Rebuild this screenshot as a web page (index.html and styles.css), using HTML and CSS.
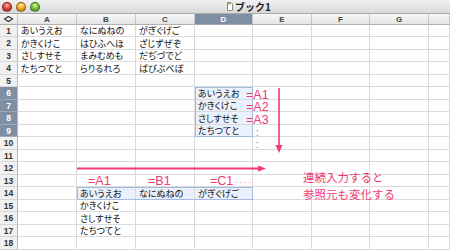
FILE: index.html
```html
<!DOCTYPE html>
<html lang="ja">
<head>
    <meta charset="UTF-8">
    <title>ブック1</title>
    <link rel="stylesheet" href="styles.css">
</head>
<body>
    <div class="window">
        <div class="titlebar">
            <div class="lights">
                <span class="light red"></span>
                <span class="light yellow"></span>
                <span class="light green"></span>
            </div>
            <div class="title">
                <svg width="6" height="9" viewBox="0 0 6 9"><path d="M0.5 0.5 H4 L5.5 2 V8.5 H0.5 Z" fill="#fff" stroke="#8a8a8a"/><path d="M1 1 H4 V2.5 H1 Z" fill="#8cc266"/></svg>
                <span>ブック1</span>
            </div>
        </div>

        <div class="sheet">
            <div class="hd corner"><svg width="9" height="6" viewBox="0 0 9 6"><path d="M4.5 0.5 L8.5 3 L4.5 5.5 L0.5 3 Z" fill="none" stroke="#333" stroke-width="1.2"/></svg></div><div class="hd">A</div><div class="hd">B</div><div class="hd">C</div><div class="hd hl">D</div><div class="hd">E</div><div class="hd">F</div><div class="hd">G</div><div class="hd"></div>

            <div class="num">1</div><div class="cell">あいうえお</div><div class="cell">なにぬねの</div><div class="cell">がぎぐげご</div><div class="cell"></div><div class="cell"></div><div class="cell"></div><div class="cell"></div><div class="cell"></div>
            <div class="num">2</div><div class="cell">かきくけこ</div><div class="cell">はひふへほ</div><div class="cell">ざじずぜぞ</div><div class="cell"></div><div class="cell"></div><div class="cell"></div><div class="cell"></div><div class="cell"></div>
            <div class="num">3</div><div class="cell">さしすせそ</div><div class="cell">まみむめも</div><div class="cell">だぢづでど</div><div class="cell"></div><div class="cell"></div><div class="cell"></div><div class="cell"></div><div class="cell"></div>
            <div class="num">4</div><div class="cell">たちつてと</div><div class="cell">らりるれろ</div><div class="cell">ばびぶべぼ</div><div class="cell"></div><div class="cell"></div><div class="cell"></div><div class="cell"></div><div class="cell"></div>
            <div class="num">5</div><div class="cell"></div><div class="cell"></div><div class="cell"></div><div class="cell"></div><div class="cell"></div><div class="cell"></div><div class="cell"></div><div class="cell"></div>
            <div class="num hl">6</div><div class="cell"></div><div class="cell"></div><div class="cell"></div><div class="cell sel">あいうえお</div><div class="cell"></div><div class="cell"></div><div class="cell"></div><div class="cell"></div>
            <div class="num hl">7</div><div class="cell"></div><div class="cell"></div><div class="cell"></div><div class="cell sel">かきくけこ</div><div class="cell"></div><div class="cell"></div><div class="cell"></div><div class="cell"></div>
            <div class="num hl">8</div><div class="cell"></div><div class="cell"></div><div class="cell"></div><div class="cell sel">さしすせそ</div><div class="cell"></div><div class="cell"></div><div class="cell"></div><div class="cell"></div>
            <div class="num hl">9</div><div class="cell"></div><div class="cell"></div><div class="cell"></div><div class="cell sel">たちつてと</div><div class="cell"></div><div class="cell"></div><div class="cell"></div><div class="cell"></div>
            <div class="num">10</div><div class="cell"></div><div class="cell"></div><div class="cell"></div><div class="cell"></div><div class="cell"></div><div class="cell"></div><div class="cell"></div><div class="cell"></div>
            <div class="num">11</div><div class="cell"></div><div class="cell"></div><div class="cell"></div><div class="cell"></div><div class="cell"></div><div class="cell"></div><div class="cell"></div><div class="cell"></div>
            <div class="num">12</div><div class="cell"></div><div class="cell"></div><div class="cell"></div><div class="cell"></div><div class="cell"></div><div class="cell"></div><div class="cell"></div><div class="cell"></div>
            <div class="num">13</div><div class="cell"></div><div class="cell"></div><div class="cell"></div><div class="cell"></div><div class="cell"></div><div class="cell"></div><div class="cell"></div><div class="cell"></div>
            <div class="num">14</div><div class="cell"></div><div class="cell sel">あいうえお</div><div class="cell sel">なにぬねの</div><div class="cell sel">がぎぐげご</div><div class="cell"></div><div class="cell"></div><div class="cell"></div><div class="cell"></div>
            <div class="num">15</div><div class="cell"></div><div class="cell">かきくけこ</div><div class="cell"></div><div class="cell"></div><div class="cell"></div><div class="cell"></div><div class="cell"></div><div class="cell"></div>
            <div class="num">16</div><div class="cell"></div><div class="cell">さしすせそ</div><div class="cell"></div><div class="cell"></div><div class="cell"></div><div class="cell"></div><div class="cell"></div><div class="cell"></div>
            <div class="num">17</div><div class="cell"></div><div class="cell">たちつてと</div><div class="cell"></div><div class="cell"></div><div class="cell"></div><div class="cell"></div><div class="cell"></div><div class="cell"></div>
            <div class="num">18</div><div class="cell"></div><div class="cell"></div><div class="cell"></div><div class="cell"></div><div class="cell"></div><div class="cell"></div><div class="cell"></div><div class="cell"></div>
        </div>

        <!-- selections -->
        <div class="selbox sel_col"></div>
        <div class="selbox sel_row"></div>

        <!-- notes drawn over the sheet -->
        <span class="ref ref_a1">=A1</span>
        <span class="ref ref_a2">=A2</span>
        <span class="ref ref_a3">=A3</span>
        <span class="dots dots_1">:</span>
        <span class="dots dots_2">:</span>

        <svg class="arrow_down" width="10" height="66" viewBox="0 0 10 66">
            <line x1="5" y1="0" x2="5" y2="58" stroke="#ef3a72" stroke-width="1.6"/>
            <polygon points="1.5,57 8.5,57 5,65" fill="#ef3a72"/>
        </svg>
        <svg class="arrow_right" width="190" height="7" viewBox="0 0 190 7">
            <line x1="0" y1="3.5" x2="182" y2="3.5" stroke="#ef3a72" stroke-width="1.8"/>
            <polygon points="181,0.5 189,3.5 181,6.5" fill="#ef3a72"/>
        </svg>

        <span class="ref ref_b_a1">=A1</span>
        <span class="ref ref_b_b1">=B1</span>
        <span class="ref ref_b_c1">=C1<small>····</small></span>

        <p class="note">連続入力すると<br>参照元も変化する</p>
    </div>
</body>
</html>
```

FILE: styles.css
```css
* {
  margin: 0;
  padding: 0;
  box-sizing: border-box;
}

body {
  width: 450px;
  height: 250px;
  overflow: hidden;
  background: #fff;
  font-family: "Liberation Sans", "Noto Sans CJK JP", sans-serif;
}

.window {
  position: relative;
  width: 450px;
  height: 250px;
}

.titlebar {
  position: relative;
  height: 14px;
  display: flex;
  align-items: center;
  background: linear-gradient(#f2f2f2, #d8d8d8);
  border-bottom: 1px solid #a9a9a9;
}

.lights {
  display: flex;
  gap: 4px;
  padding-left: 2px;
}

.light {
  width: 10px;
  height: 10px;
  border-radius: 50%;
  border: 1px solid rgba(0, 0, 0, 0.35);
}

.red {
  background: radial-gradient(circle at 50% 30%, #ffc2b8 0, #e0473c 45%, #9c1d14 100%);
}

.yellow {
  background: radial-gradient(circle at 50% 30%, #ffeeb0 0, #f0ad2a 45%, #a4620a 100%);
}

.green {
  background: radial-gradient(circle at 50% 30%, #d8f7b0 0, #79c23c 45%, #3c7a12 100%);
}

.title {
  position: absolute;
  left: 227px;
  top: 0;
  height: 13px;
  display: flex;
  align-items: center;
  gap: 2px;
  font-family: "Noto Sans CJK JP", sans-serif;
  font-size: 10px;
  font-weight: bold;
  color: #222;
}

.sheet {
  display: grid;
  grid-template-columns: 18px 59px 59px 59px 58px 59px 58px 59px 21px;
  grid-template-rows: 11px repeat(9, 12px 13px);
}

.hd {
  display: flex;
  align-items: center;
  justify-content: center;
  background: linear-gradient(#f8f8f8, #e4e4e4);
  border-right: 1px solid #c6c6c6;
  border-bottom: 1px solid #b0b0b0;
  font-size: 8px;
  font-weight: bold;
  color: #444;
}

.num {
  display: flex;
  align-items: center;
  justify-content: center;
  background: #f1f1f1;
  border-right: 1px solid #b8b8b8;
  border-bottom: 1px solid #d6d6d6;
  font-size: 8.5px;
  font-weight: bold;
  color: #333;
}

.hd.hl,
.num.hl {
  background: #7f8fa3;
  color: #fff;
  border-bottom-color: #9aa8b8;
}

.cell {
  display: flex;
  align-items: center;
  padding-left: 3px;
  border-right: 1px solid #dadada;
  border-bottom: 1px solid #dadada;
  font-family: "Noto Sans CJK JP", sans-serif;
  font-size: 9px;
  font-feature-settings: "palt";
  color: #111;
  white-space: nowrap;
  overflow: hidden;
}

.cell.sel {
  background: #eaf1fc;
}

.selbox {
  position: absolute;
  border: 1px solid #a4bbdd;
}

.sel_col {
  left: 195px;
  top: 87px;
  width: 58px;
  height: 50px;
}

.sel_row {
  left: 77px;
  top: 187px;
  width: 176px;
  height: 13px;
}

.ref {
  position: absolute;
  font-size: 12.5px;
  line-height: 11px;
  color: #ef3a72;
  white-space: nowrap;
}

.ref_a1 { left: 246px; top: 89.5px; }
.ref_a2 { left: 246px; top: 102px; }
.ref_a3 { left: 246px; top: 114.5px; }

.ref_b_a1 { left: 88px; top: 176px; }
.ref_b_b1 { left: 148px; top: 176px; }
.ref_b_c1 { left: 210px; top: 176px; }

.ref small {
  font-size: 8px;
  letter-spacing: 2px;
  margin-left: 1px;
}

.dots {
  position: absolute;
  left: 256px;
  font-size: 10px;
  line-height: 9px;
  color: #ef3a72;
}

.dots_1 { top: 128px; }
.dots_2 { top: 140px; }

.arrow_down {
  position: absolute;
  left: 274px;
  top: 88px;
}

.arrow_right {
  position: absolute;
  left: 77px;
  top: 165px;
}

.note {
  position: absolute;
  left: 303px;
  top: 169px;
  font-family: "Noto Sans CJK JP", sans-serif;
  font-size: 11.5px;
  line-height: 17px;
  color: #ef3a72;
}
```
